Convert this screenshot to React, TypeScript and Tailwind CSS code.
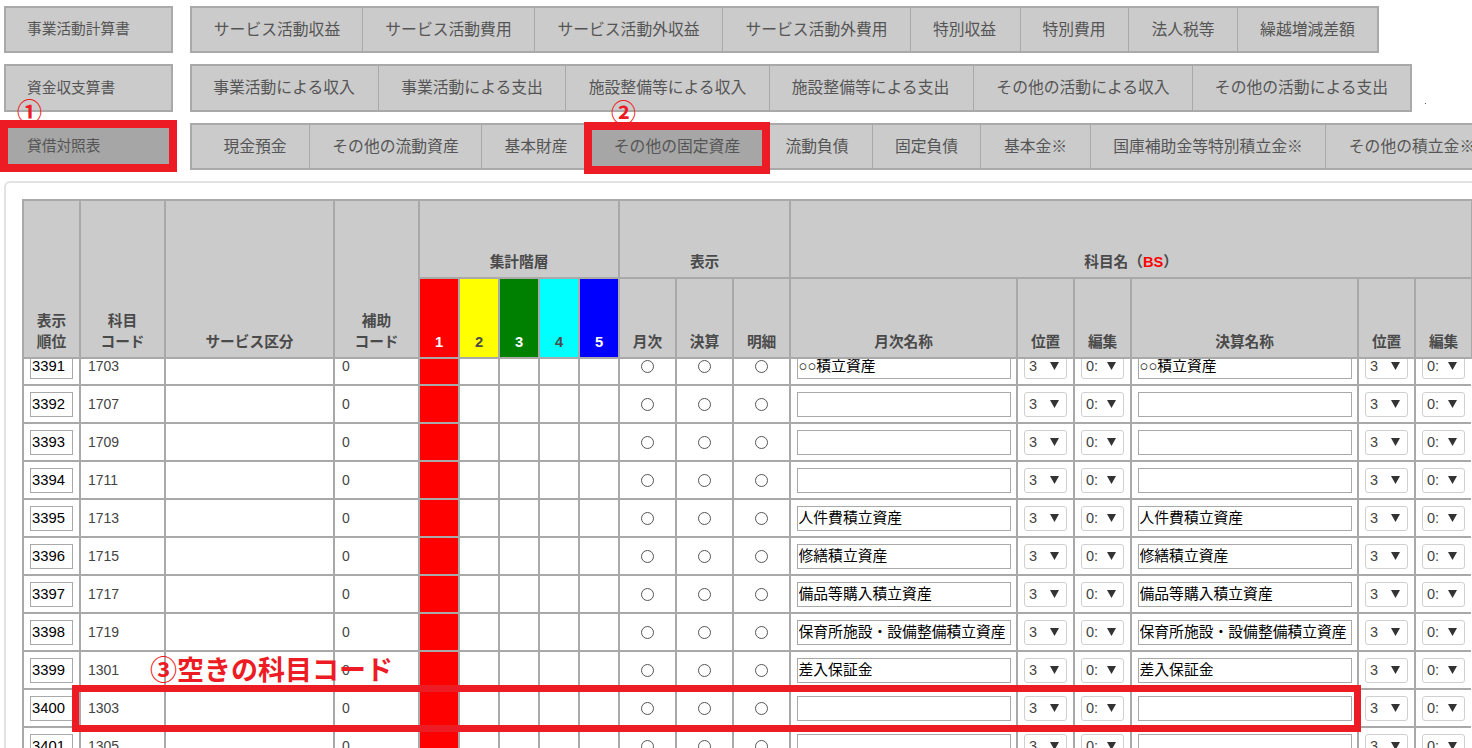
import React from "react";

type Tab = { label: string; w: string; active?: boolean; extra?: string };

const row1: Tab[] = [
  { label: "サービス活動収益", w: "w-[172px]" },
  { label: "サービス活動費用", w: "w-[172px]" },
  { label: "サービス活動外収益", w: "w-[188px]" },
  { label: "サービス活動外費用", w: "w-[188px]" },
  { label: "特別収益", w: "w-[110px]", extra: "pr-[2px]" },
  { label: "特別費用", w: "w-[108px]", extra: "pr-[1px]" },
  { label: "法人税等", w: "w-[109px]" },
  { label: "繰越増減差額", w: "w-[140px]" },
];
const row2: Tab[] = [
  { label: "事業活動による収入", w: "w-[188px]", extra: "pr-[2px]" },
  { label: "事業活動による支出", w: "w-[187px]" },
  { label: "施設整備等による収入", w: "w-[204px]" },
  { label: "施設整備等による支出", w: "w-[204px]", extra: "pr-[2px]" },
  { label: "その他の活動による収入", w: "w-[219px]" },
  { label: "その他の活動による支出", w: "w-[218px]" },
];
const row3: Tab[] = [
  { label: "現金預金", w: "w-[119px]", extra: "pl-[9px]" },
  { label: "その他の流動資産", w: "w-[172px]" },
  { label: "基本財産", w: "w-[109px]" },
  { label: "その他の固定資産", w: "w-[174px]", active: true, extra: "pr-[1px]" },
  { label: "流動負債", w: "w-[108px]", extra: "pr-[3px]" },
  { label: "固定負債", w: "w-[108px]" },
  { label: "基本金※", w: "w-[110px]" },
  { label: "国庫補助金等特別積立金※", w: "w-[235px]" },
  { label: "その他の積立金※", w: "w-[175px]", extra: "pr-[2px]" },
];

const rows = [
  { order: "3391", code: "1703", name: "○○積立資産" },
  { order: "3392", code: "1707", name: "" },
  { order: "3393", code: "1709", name: "" },
  { order: "3394", code: "1711", name: "" },
  { order: "3395", code: "1713", name: "人件費積立資産" },
  { order: "3396", code: "1715", name: "修繕積立資産" },
  { order: "3397", code: "1717", name: "備品等購入積立資産" },
  { order: "3398", code: "1719", name: "保育所施設・設備整備積立資産" },
  { order: "3399", code: "1301", name: "差入保証金" },
  { order: "3400", code: "1303", name: "" },
  { order: "3401", code: "1305", name: "" },
];

const colWidths = [
  "w-[57px]", "w-[85px]", "w-[169px]", "w-[85px]",
  "w-[40px]", "w-[40px]", "w-[40px]", "w-[40px]", "w-[40px]",
  "w-[57px]", "w-[57px]", "w-[57px]",
  "w-[227px]", "w-[57px]", "w-[57px]",
  "w-[227px]", "w-[57px]", "w-[57px]",
];

function Cols() {
  return (
    <colgroup>
      {colWidths.map((c, i) => (
        <col key={i} className={c} />
      ))}
    </colgroup>
  );
}

function TabBar({ tabs }: { tabs: Tab[] }) {
  return (
    <nav className="flex h-full w-max shrink-0 border-y-2 border-r-2 border-[#a9a9a9] bg-[#cbcbcb]">
      {tabs.map((t) => (
        <div
          key={t.label}
          className={`flex shrink-0 items-center justify-center border-l border-[#a9a9a9] first:border-l-2 text-[15.8px] text-[#555] ${t.w} ${t.active ? "bg-[#a6a6a6]" : ""} ${t.extra ?? ""}`}
        >
          {t.label}
        </div>
      ))}
    </nav>
  );
}

function SideButton({ label, active }: { label: string; active?: boolean }) {
  return (
    <div
      className={`flex h-full w-[169px] shrink-0 items-center border-2 border-[#a9a9a9] pl-[21px] text-[14.7px] text-[#555] ${active ? "bg-[#a6a6a6]" : "bg-[#cbcbcb]"}`}
    >
      {label}
    </div>
  );
}

function FakeSelect({ value }: { value: string }) {
  return (
    <div className="mx-auto flex h-[25px] w-[43px] items-center justify-between rounded-[3px] border border-[#d0d0d0] bg-white pl-[4px] pr-[7px] pt-[2px] text-[14.5px] text-[#444]">
      <span>{value}</span>
      <svg width="9" height="8" viewBox="0 0 9 8" className="mb-[2px] shrink-0">
        <path d="M0 0h9L4.5 8z" fill="#333" />
      </svg>
    </div>
  );
}

function TextBox({ value, w }: { value: string; w: string }) {
  return (
    <input
      readOnly
      value={value}
      className={`mx-auto block h-[25px] border border-[#a9a9a9] bg-white px-[1px] text-[14.8px] leading-[20px] text-black ${w}`}
    />
  );
}

function Radio() {
  return (
    <input
      type="radio"
      readOnly
      className="mx-auto block h-[13px] w-[13px] appearance-none rounded-full border border-[#555] bg-white"
    />
  );
}

const thBase = "border-2 border-[#a9a9a9] bg-[#cbcbcb] align-bottom text-center text-[14.7px] leading-[21px] font-bold text-[#4a4a4a]";
const tdBase = "border-2 border-[#a9a9a9] p-0 align-middle";
const tdText = "border-2 border-[#a9a9a9] py-0 pr-0 pl-[7px] align-middle text-[14px] text-[#444]";

function Th({ children, col, row, tint }: { children?: React.ReactNode; col?: number; row?: number; tint?: string }) {
  return (
    <th colSpan={col} rowSpan={row} className={`${thBase} pb-[4px] ${tint ?? ""}`}>
      {children}
    </th>
  );
}

export default function App() {
  return (
    <div className="relative h-[748px] w-[1472px] overflow-hidden bg-white font-['Liberation_Sans','Noto_Sans_CJK_JP',sans-serif]">
      <div className="flex h-[47px] mt-[6px] ml-[4px] gap-[17px]">
        <SideButton label="事業活動計算書" />
        <TabBar tabs={row1} />
      </div>
      <div className="flex h-[48px] mt-[11px] ml-[4px] gap-[17px]">
        <SideButton label="資金収支算書" />
        <TabBar tabs={row2} />
        <span className="mb-[8px] -ml-[4px] h-px w-px self-end bg-[#555]" />
      </div>
      <div className="flex h-[47px] mt-[11px] ml-[4px] gap-[17px]">
        <SideButton label="貸借対照表" active />
        <TabBar tabs={row3} />
      </div>

      <div className="mt-[11px] ml-[4px] h-[600px] w-[1520px] rounded-[6px] border-2 border-[#e2e2e2] pl-[16px] pt-[16px]">
        <table className="w-[1449px] table-fixed border-collapse">
          <Cols />
          <thead>
            <tr className="h-[78px]">
              <Th row={2}>表示<br />順位</Th>
              <Th row={2}>科目<br />コード</Th>
              <Th row={2}>サービス区分</Th>
              <Th row={2}>補助<br />コード</Th>
              <Th col={5}>集計階層</Th>
              <Th col={3}>表示</Th>
              <Th col={6}>
                科目名（<span className="text-[#ff0000]">BS</span>）
              </Th>
            </tr>
            <tr className="h-[80px]">
              <Th tint="!bg-[#ff0000] !text-white">1</Th>
              <Th tint="!bg-[#ffff00]">2</Th>
              <Th tint="!bg-[#008000] !text-white">3</Th>
              <Th tint="!bg-[#00ffff]">4</Th>
              <Th tint="!bg-[#0000ff] !text-white">5</Th>
              <Th>月次</Th>
              <Th>決算</Th>
              <Th>明細</Th>
              <Th>月次名称</Th>
              <Th>位置</Th>
              <Th>編集</Th>
              <Th>決算名称</Th>
              <Th>位置</Th>
              <Th>編集</Th>
            </tr>
          </thead>
        </table>
        <div className="h-[400px] w-[1449px] overflow-hidden">
          <table className="-mt-[13px] w-[1449px] table-fixed border-collapse">
            <Cols />
            <tbody>
              {rows.map((r) => (
                <tr key={r.order} className="h-[38px]">
                  <td className={tdBase}>
                    <TextBox value={r.order} w="w-[43px]" />
                  </td>
                  <td className={tdText}>{r.code}</td>
                  <td className={tdBase} />
                  <td className={tdText}>0</td>
                  <td className={`${tdBase} bg-[#ff0000]`} />
                  <td className={tdBase} />
                  <td className={tdBase} />
                  <td className={tdBase} />
                  <td className={tdBase} />
                  <td className={tdBase}><Radio /></td>
                  <td className={tdBase}><Radio /></td>
                  <td className={tdBase}><Radio /></td>
                  <td className={tdBase}>
                    <TextBox value={r.name} w="w-[214px] pb-[3px]" />
                  </td>
                  <td className={tdBase}><FakeSelect value="3" /></td>
                  <td className={tdBase}><FakeSelect value="0:" /></td>
                  <td className={tdBase}>
                    <TextBox value={r.name} w="w-[214px] pb-[3px]" />
                  </td>
                  <td className={tdBase}><FakeSelect value="3" /></td>
                  <td className={tdBase}><FakeSelect value="0:" /></td>
                </tr>
              ))}
            </tbody>
          </table>
        </div>
      </div>

      {/* Red annotations drawn over the page */}
      <div className="absolute left-0 top-[120px] h-[52px] w-[177px] border-[8px] border-[#ed1c24]" />
      <div className="absolute left-[584px] top-[122px] h-[52px] w-[186px] border-[8px] border-[#ed1c24]" />
      <div className="absolute left-[72px] top-[685px] h-[47px] w-[1289px] border-[7px] border-[#ed1c24]" />
      <span className="absolute left-[17px] top-[92px] text-[25px] leading-[36px] font-bold text-[#ed1c24] font-['Noto_Sans_CJK_JP',sans-serif]">①</span>
      <span className="absolute left-[611px] top-[93px] text-[25px] leading-[36px] font-bold text-[#ed1c24] font-['Noto_Sans_CJK_JP',sans-serif]">②</span>
      <span className="absolute left-[150px] top-[651px] text-[27px] leading-[36px] font-bold text-[#ed1c24] font-['Noto_Sans_CJK_JP',sans-serif]">③空きの科目コード</span>
    </div>
  );
}
